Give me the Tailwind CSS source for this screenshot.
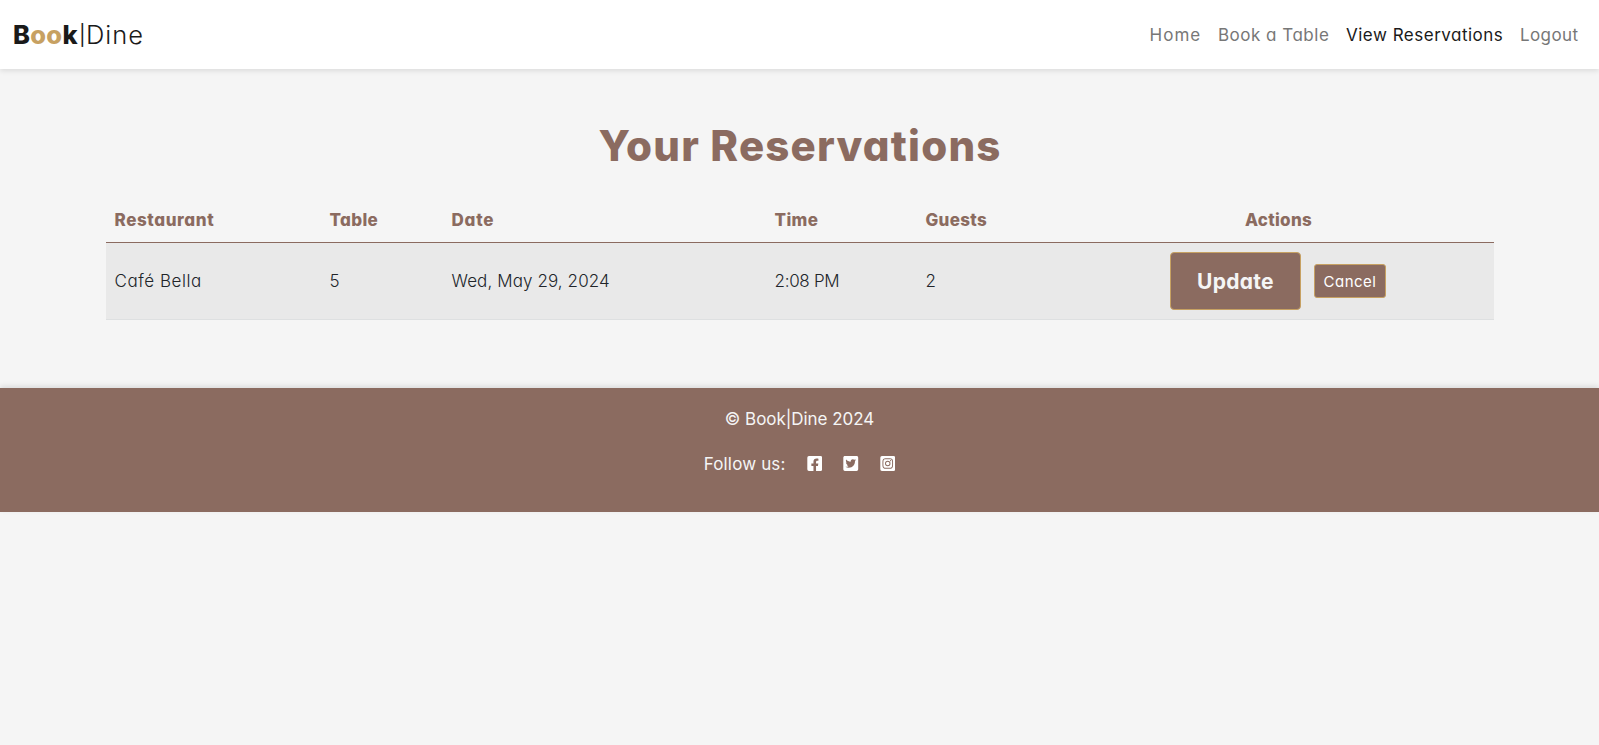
<!DOCTYPE html>
<html lang="en">
<head>
<meta charset="utf-8">
<title>Book|Dine - Your Reservations</title>
<script src="https://cdn.jsdelivr.net/npm/@tailwindcss/browser@4"></script>
</head>
<body class="min-h-screen bg-[#f5f5f5] font-['Inter','Liberation_Sans',sans-serif] text-[17px] leading-6 text-[#212529] [font-feature-settings:'cv11']">
<header class="relative flex h-[69px] items-center justify-between bg-white pl-[13px] shadow-[0_2px_5px_rgba(0,0,0,0.1)]">
  <a href="#" class="flex items-center pt-px text-[25.5px] leading-[38px] text-[#1a1a1a]">
    <span class="w-[67px] font-extrabold tracking-[0.3px]">B<span class="text-[#c7a162]">oo</span>k</span>
    <span class="w-[6px] text-[20px] font-normal"><span class="-ml-px">|</span></span>
    <span class="font-light tracking-[1px]">Dine</span>
  </a>
  <nav class="flex pt-px text-[#777]">
    <a href="#" class="w-[68.5px] tracking-[1.05px]">Home</a>
    <a href="#" class="w-[128px] tracking-[0.5px] whitespace-nowrap">Book a Table</a>
    <a href="#" class="w-[174px] tracking-[0.5px] whitespace-nowrap text-[#1a1a1a]">View Reservations</a>
    <a href="#" class="w-[79px] tracking-[0.4px]">Logout</a>
  </nav>
</header>
<main class="mx-auto w-[1388px] pt-12 pb-[68px]">
  <h1 class="mb-[22px] pl-px text-center text-[42px] leading-[58px] font-extrabold tracking-[1.2px] text-[#8b6b60]">Your Reservations</h1>
  <table class="w-full table-fixed border-collapse text-left">
    <colgroup><col class="w-[216px]"><col class="w-[122px]"><col class="w-[323px]"><col class="w-[151px]"><col class="w-[146px]"><col class="w-[430px]"></colgroup>
    <thead>
      <tr class="h-[45px] border-b border-[#8b6b60] font-bold text-[#8b6b60]">
        <th class="pl-[9px] pt-px font-extrabold tracking-[0.6px]">Restaurant</th>
        <th class="px-2 pt-px font-extrabold tracking-[0.35px]">Table</th>
        <th class="px-2 pt-px font-extrabold tracking-[0.8px]">Date</th>
        <th class="px-2 pt-px font-extrabold tracking-[0.4px]">Time</th>
        <th class="px-2 pt-px font-extrabold tracking-[0.3px]">Guests</th>
        <th class="px-2 pt-px text-center font-extrabold tracking-[0.3px]">Actions</th>
      </tr>
    </thead>
    <tbody>
      <tr class="h-[77px] border-b border-[#dee0e1] bg-[#e9e9e9] font-light">
        <td class="pl-[9px] tracking-[0.55px]">Café Bella</td>
        <td class="px-2">5</td>
        <td class="px-2 tracking-[0.1px]">Wed, May 29, 2024</td>
        <td class="px-2 tracking-[-0.3px]">2:08 PM</td>
        <td class="px-2">2</td>
        <td>
          <div class="flex items-center justify-center gap-[13px] pr-[2px]">
            <button class="h-[58px] w-[131px] rounded-[4px] border border-[#c7a162] bg-[#8b6b60] pl-px pt-[3px] text-[21px] font-bold tracking-[0.3px] text-[#f5f5f5]">Update</button>
            <button class="h-[34px] w-[72px] rounded-[3px] border border-[#c7a162] bg-[#8b6b60] pl-px pt-[3px] text-[15px] font-normal tracking-[0.5px] text-white">Cancel</button>
          </div>
        </td>
      </tr>
    </tbody>
  </table>
</main>
<footer class="flex h-[124px] flex-col items-center bg-[#8b6b60] pt-[19px] text-[#f5f5f5] shadow-[0_-2px_5px_rgba(0,0,0,0.1)]">
  <p class="tracking-[-0.05px]">© Book|Dine 2024</p>
  <div class="mt-[21px] flex items-center">
    <span class="w-[103px] tracking-[0.15px]">Follow us:</span>
    <div class="flex items-center gap-[21px] text-white">
      <svg class="h-[17px] w-[15.5px]" viewBox="0 0 448 512" fill="currentColor"><path d="M400 32H48A48 48 0 0 0 0 80v352a48 48 0 0 0 48 48h137.25V327.690h-63V256h63v-54.640c0-62.150 37-96.480 93.670-96.480 27.140 0 55.520 4.840 55.520 4.840v61h-31.270c-30.810 0-40.420 19.120-40.420 38.730V256h68.780l-11 71.690h-57.780V480H400a48 48 0 0 0 48-48V80a48 48 0 0 0-48-48z"/></svg>
      <svg class="h-[17px] w-[15.5px]" viewBox="0 0 448 512" fill="currentColor"><path d="M400 32H48C21.500 32 0 53.500 0 80v352c0 26.500 21.500 48 48 48h352c26.500 0 48-21.500 48-48V80c0-26.500-21.500-48-48-48zm-48.900 158.800c.2 2.800.2 5.700.2 8.500 0 86.700-66 186.600-186.600 186.600-37.200 0-71.700-10.800-100.700-29.400 5.300.6 10.400.8 15.800.8 30.700 0 58.900-10.400 81.400-28-28.800-.6-53-19.500-61.300-45.500 10.100 1.500 19.200 1.500 29.600-1.200-30-6.100-52.500-32.500-52.500-64.400v-.8c8.700 4.900 18.900 7.900 29.600 8.300a65.447 65.447 0 0 1-29.200-54.600c0-12.200 3.200-23.400 8.900-33.100 32.300 39.800 80.800 65.800 135.200 68.600-9.300-44.500 24-80.600 64-80.600 18.900 0 35.900 7.900 47.900 20.700 14.800-2.800 29-8.300 41.600-15.800-4.900 15.200-15.200 28-28.800 36.100 13.200-1.400 26-5.100 37.800-10.200-8.900 13.100-20.100 24.700-32.900 34z"/></svg>
      <svg class="h-[17px] w-[15.5px]" viewBox="0 0 448 512" fill="currentColor"><path d="M224 202.660A53.340 53.340 0 1 0 277.360 256 53.380 53.380 0 0 0 224 202.660zm124.710-41a54 54 0 0 0-30.410-30.410c-21-8.290-71-6.430-94.300-6.430s-73.250-1.930-94.310 6.430a54 54 0 0 0-30.410 30.410c-8.280 21-6.430 71.050-6.430 94.330s-1.850 73.270 6.470 94.340a54 54 0 0 0 30.410 30.410c21 8.290 71 6.430 94.310 6.430s73.240 1.930 94.300-6.430a54 54 0 0 0 30.410-30.410c8.350-21 6.430-71.050 6.430-94.330s1.920-73.260-6.430-94.330zM224 338a82 82 0 1 1 82-82 81.900 81.900 0 0 1-82 82zm85.380-148.300a19.140 19.140 0 1 1 19.130-19.140 19.100 19.100 0 0 1-19.090 19.180zM400 32H48A48 48 0 0 0 0 80v352a48 48 0 0 0 48 48h352a48 48 0 0 0 48-48V80a48 48 0 0 0-48-48zm-17.120 290c-1.290 25.630-7.140 48.340-25.850 67s-41.400 24.630-67 25.850c-26.410 1.490-105.590 1.490-132 0-25.630-1.290-48.260-7.150-67-25.850s-24.630-41.420-25.850-67c-1.490-26.420-1.490-105.610 0-132 1.290-25.630 7.070-48.340 25.850-67s41.470-24.560 67-25.780c26.410-1.490 105.590-1.490 132 0 25.630 1.290 48.330 7.150 67 25.850s24.630 41.420 25.850 67.050c1.490 26.320 1.490 105.440 0 131.880z"/></svg>
    </div>
  </div>
</footer>
</body>
</html>
